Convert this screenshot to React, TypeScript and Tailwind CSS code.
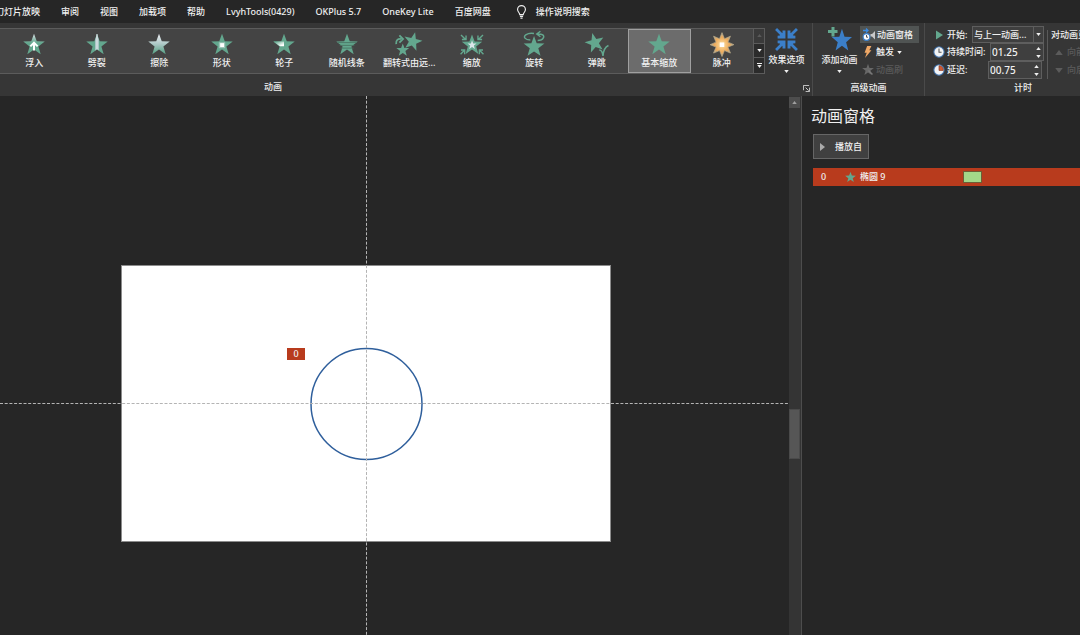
import { useId, useState, type ReactNode } from 'react';

const STAR = 'M12 -.3 15 7.9 23.7 8.100 16.800 13.500 19.300 22 12 17 4.700 22 7.200 13.500 .3 8.100 9 7.900Z';
const GREEN = '#63a78e';

type EffectKind =
  | 'float'
  | 'split'
  | 'wipe'
  | 'shape'
  | 'wheel'
  | 'bars'
  | 'turn'
  | 'zoom'
  | 'spin'
  | 'bounce'
  | 'basic'
  | 'pulse';

const TABS = ['幻灯片放映', '审阅', '视图', '加载项', '帮助', 'LvyhTools(0429)', 'OKPlus 5.7', 'OneKey Lite', '百度网盘'];

const EFFECTS: { kind: EffectKind; label: string }[] = [
  { kind: 'float', label: '浮入' },
  { kind: 'split', label: '劈裂' },
  { kind: 'wipe', label: '擦除' },
  { kind: 'shape', label: '形状' },
  { kind: 'wheel', label: '轮子' },
  { kind: 'bars', label: '随机线条' },
  { kind: 'turn', label: '翻转式由远...' },
  { kind: 'zoom', label: '缩放' },
  { kind: 'spin', label: '旋转' },
  { kind: 'bounce', label: '弹跳' },
  { kind: 'basic', label: '基本缩放' },
  { kind: 'pulse', label: '脉冲' },
];

function EffectGlyph({ kind }: { kind: EffectKind }) {
  const id = useId();
  const star = <path d={STAR} fill={GREEN} />;

  switch (kind) {
    case 'float':
      return (
        <>
          <linearGradient id={id} x1="0" y1="0" x2="0" y2="1">
            <stop offset="0" stopColor="#dde3e8" />
            <stop offset="0.45" stopColor={GREEN} />
          </linearGradient>
          <path d={STAR} fill={`url(#${id})`} />
          <path d="M12 18V11M8 13.5 12 9.5 16 13.5" fill="none" stroke="#fff" strokeWidth="2.2" />
        </>
      );
    case 'split':
      return (
        <>
          {star}
          <path d="M12 0 14 6.2V18L12 16.6 10 18V6.2Z" fill="#b7cbd0" />
          <path d="M12 0V16.6" stroke="#e4e9ec" strokeWidth="1" />
        </>
      );
    case 'wipe':
      return (
        <>
          <linearGradient id={id} x1="0" y1="0" x2="0" y2="1">
            <stop offset="0.1" stopColor="#e4e9ee" />
            <stop offset="0.5" stopColor="#adc8c6" />
            <stop offset="0.9" stopColor={GREEN} />
          </linearGradient>
          <path d={STAR} fill={`url(#${id})`} />
        </>
      );
    case 'shape':
      return (
        <>
          {star}
          <rect x="8.5" y="9" width="7" height="6.5" fill="#9fc6b9" />
          <rect x="10" y="10" width="4.2" height="4.2" fill="#fff" />
        </>
      );
    case 'wheel':
      return (
        <>
          <linearGradient id={id} x1="0" y1="0" x2="1" y2="1">
            <stop offset="0.1" stopColor={GREEN} />
            <stop offset="0.8" stopColor="#fff" />
          </linearGradient>
          {star}
          <path d="M0.6 8.3H12V13.4H7.6Z" fill={`url(#${id})`} />
        </>
      );
    case 'bars':
      return (
        <>
          {star}
          <path d="M2 9.4H22M4 12.4H20M5 15.4H19" stroke="#47705f" strokeWidth=".9" />
        </>
      );
    case 'turn':
      return (
        <>
          <path d={STAR} fill={GREEN} transform="translate(6 -2) scale(.86) rotate(14 12 11)" />
          <path d={STAR} fill={GREEN} transform="translate(-2 10.500) scale(.6)" />
          <path d="M-2 11C-2.500 6.500 0 5 3.500 5.500M1.500 1.500 5.500 5.500 1.500 9.500" fill="none" stroke={GREEN} strokeWidth="2" />
        </>
      );
    case 'zoom':
      return (
        <>
          <path d={STAR} fill={GREEN} transform="translate(.6 .8) scale(.95)" />
          <path d={STAR} fill="#dbe5ea" transform="translate(7 7) scale(.42)" />
          <path
            d="M0 1 5 6M5.500 1.500V6H1M24 1 19 6M18.500 1.500V6H23M-.5 22 4 17.500M0 17.500H4V22M24.500 22 20 17.500M24 17.500H20V22"
            fill="none"
            stroke={GREEN}
            strokeWidth="1.5"
          />
        </>
      );
    case 'spin':
      return (
        <>
          <path d={STAR} fill={GREEN} transform="translate(.4 2.500) scale(.97)" />
          <path
            d="M8 6.500C2 6.500 0 3 3 1C6-1 9-1 12-.5M19-3 15 0 19 3M15 0C21-.5 24 1.500 22 4.500C21 6.500 19 7 16 7"
            fill="none"
            stroke={GREEN}
            strokeWidth="1.6"
          />
        </>
      );
    case 'bounce':
      return (
        <>
          <path d={STAR} fill={GREEN} transform="translate(-1.500 -1) scale(.9) rotate(-14 12 11)" />
          <path d="M14.500 17.500C17 17.500 18 19 18.500 24C19 18 21 14 24.500 12.500" fill="none" stroke={GREEN} strokeWidth="1.700" />
        </>
      );
    case 'pulse':
      return (
        <>
          <radialGradient id={id} gradientUnits="userSpaceOnUse" cx="12" cy="11.600" r="12.500">
            <stop offset="0.2" stopColor="#f8d08c" />
            <stop offset="0.65" stopColor="#ecaa5c" />
            <stop offset="1" stopColor="#b3aa94" />
          </radialGradient>
          <path
            d="M12-1.500 14.700 5.200 21.200 2.400 18.500 8.900 25 11.600 18.500 14.300 21.200 20.800 14.700 18.100 12 24.600 9.300 18.100 2.800 20.800 5.500 14.300-1 11.600 5.500 8.900 2.800 2.400 9.300 5.200Z"
            fill={`url(#${id})`}
            stroke="#b8a887"
            strokeWidth=".8"
          />
          <rect x="9.500" y="9.200" width="5" height="5" fill="#fff" />
        </>
      );
    default:
      return star;
  }
}

function Caret({ up = false, className = 'h-[3px] w-[5px]' }: { up?: boolean; className?: string }) {
  return (
    <svg viewBox="0 0 6 4" className={`shrink-0 ${className}`} fill="currentColor" aria-hidden="true">
      <path d={up ? 'M0 4H6L3 0Z' : 'M0 0H6L3 4Z'} />
    </svg>
  );
}

function TabBar() {
  return (
    <nav className="flex h-[23px] shrink-0 items-center gap-[21px] overflow-hidden whitespace-nowrap bg-[#262626]">
      {TABS.map((tab, i) => (
        <button key={tab} type="button" className={i === 0 ? '-ml-[5px]' : ''}>
          {tab}
        </button>
      ))}
      <button type="button" className="flex items-center gap-[9px] pl-1">
        <svg viewBox="0 0 12 16" className="h-[14px] w-[11px]" fill="none" stroke="#eee" strokeWidth="1.3" aria-hidden="true">
          <path d="M4 11C4 9 1.500 8 1.500 5.200A4.500 4.500 0 0 1 10.500 5.200C10.500 8 8 9 8 11ZM4.200 13H7.800M4.800 15H7.200" />
        </svg>
        操作说明搜索
      </button>
    </nav>
  );
}

function Gallery() {
  const [selected, setSelected] = useState<EffectKind>('basic');

  return (
    <section className="flex w-[765px] shrink-0 flex-col pt-[5px]">
      <div className="flex h-[46px] border border-l-0 border-[#5c5c5c] bg-[#444]">
        <div className="grid flex-1 grid-cols-12 pl-[3px]">
          {EFFECTS.map(({ kind, label }) => (
            <button
              key={kind}
              type="button"
              aria-pressed={selected === kind}
              onClick={() => setSelected(kind)}
              className={`flex flex-col items-center whitespace-nowrap border pt-1 ${
                selected === kind ? 'border-[#a0a0a0] bg-[#6c6c6c]' : 'border-transparent'
              }`}
            >
              <svg viewBox="0 0 24 24" className="h-[22px] w-[22px] shrink-0 overflow-visible" aria-hidden="true">
                <EffectGlyph kind={kind} />
              </svg>
              {label}
            </button>
          ))}
        </div>
        <div className="grid w-[11px] grid-rows-3 divide-y divide-[#5c5c5c] border-l border-[#5c5c5c] bg-[#2b2b2b]">
          <button type="button" aria-label="上一行" disabled className="flex items-center justify-center bg-[#3a3a3a] text-[#5a5a5a]">
            <Caret up />
          </button>
          <button type="button" aria-label="下一行" className="flex items-center justify-center">
            <Caret />
          </button>
          <button type="button" aria-label="其他" className="flex flex-col items-center justify-center gap-px">
            <span className="h-px w-[5px] bg-current" />
            <Caret />
          </button>
        </div>
      </div>
      <h2 className="flex flex-1 items-center justify-center pr-[219px] pt-1">动画</h2>
    </section>
  );
}

function EffectOptions() {
  return (
    <section className="flex w-12 shrink-0 flex-col border-r border-[#4a4a4a] pt-1">
      <button type="button" className="flex flex-col items-center whitespace-nowrap pr-1">
        <svg viewBox="0 0 22 22" className="mt-px h-[23px] w-[23px]" aria-hidden="true">
          <path d="M1 1 7 7M21 1 15 7M1 21 7 15M21 21 15 15" stroke="#3b7fc9" strokeWidth="2.600" />
          <path
            d="M10 10H2.500V7.500L4.500 7.200 7.200 4.500V2.500H10ZM12 10H19.500V7.500L17.500 7.200 14.800 4.500V2.500H12ZM10 12H2.500V14.500L4.500 14.800 7.200 17.500V19.500H10ZM12 12H19.500V14.500L17.500 14.800 14.800 17.500V19.500H12Z"
            fill="#3b7fc9"
          />
        </svg>
        <span className="mt-[2px]">效果选项</span>
        <Caret className="mt-[3px] h-[3px] w-[5px]" />
      </button>
      <button type="button" aria-label="更多动画选项" className="mr-[2px] mt-auto self-end pb-1">
        <svg viewBox="0 0 8 8" className="h-[7px] w-[7px]" fill="none" stroke="#ddd" aria-hidden="true">
          <path d="M.5 6V.5H7M3 3 6.500 6.500M7.500 3V7.500H3" />
        </svg>
      </button>
    </section>
  );
}

function AdvancedGroup() {
  return (
    <section className="flex w-28 shrink-0 flex-col border-r border-[#4a4a4a] pt-[3px]">
      <div className="flex gap-[2px] pl-2">
        <button type="button" className="flex w-[37px] shrink-0 flex-col items-center whitespace-nowrap">
          <svg viewBox="0 0 24 24" className="mt-px h-6 w-6" aria-hidden="true">
            <path d="M3.500 0H6.500V3H9.500V6H6.500V9.500H3.500V6H0V3H3.500Z" fill={GREEN} />
            <path d={STAR} fill="#3b7fc9" transform="translate(3.500 2) scale(.87 .98)" />
          </svg>
          <span className="mt-[2px]">添加动画</span>
          <Caret className="mt-[3px] h-[3px] w-[5px]" />
        </button>
        <div className="flex flex-col items-start">
          <button type="button" aria-pressed="true" className="flex h-[17px] w-[59px] items-center gap-px whitespace-nowrap bg-[#505453] pl-[2px]">
            <svg viewBox="0 0 14 14" className="h-[14px] w-[14px]" fill="none" aria-hidden="true">
              <path d="M1 2.500H6M4 .5 6 2.500 4 4.500" stroke="#3b8be0" strokeWidth="1.300" />
              <circle cx="4.500" cy="9" r="3.400" fill="#fff" stroke="#3b7fc9" strokeWidth="1.200" />
              <path d="M4.500 7V9.200H6" stroke="#555" />
              <path d="M8.500 6H10L13 3V11.500L10 8.500H8.500Z" fill="#c8c8c8" />
            </svg>
            动画窗格
          </button>
          <button type="button" className="flex h-[18px] items-center gap-[3px] pl-[3px]">
            <svg viewBox="0 0 10 14" className="h-[12px] w-[10px]" aria-hidden="true">
              <path d="M4 0H9L6.500 5H9L1.500 14 3.500 8H1Z" fill="#f0a866" />
            </svg>
            触发
            <Caret />
          </button>
          <button type="button" disabled className="flex h-[18px] items-center gap-[2px] pl-[2px] text-[#5b5b5b]">
            <svg viewBox="0 0 24 24" className="h-[12px] w-[12px]" aria-hidden="true">
              <path d={STAR} fill="#686868" />
              <path d="M13 13 21 21" stroke="#777" strokeWidth="3" />
            </svg>
            动画刷
          </button>
        </div>
      </div>
      <h2 className="flex flex-1 items-center justify-center">高级动画</h2>
    </section>
  );
}

function ClockIcon({ late = false }: { late?: boolean }) {
  return (
    <svg viewBox="0 0 14 14" className="h-[12px] w-[12px] shrink-0" aria-hidden="true">
      <circle cx="7" cy="7" r="6" fill="#f1f3f5" stroke="#3e6fa9" strokeWidth="1.200" />
      {late ? (
        <path d="M7 7.500V2A5 5 0 0 1 12 7.500Z" fill="#cf5a35" stroke="#8a3b24" strokeWidth=".8" />
      ) : (
        <path d="M7 3V7.300H10" fill="none" stroke="#555" strokeWidth="1.200" />
      )}
    </svg>
  );
}

function TimeField({ id, label, icon, initial, shift }: { id: string; label: string; icon: ReactNode; initial: string; shift?: boolean }) {
  const [value, setValue] = useState(initial);

  function step(delta: number) {
    const next = Math.max(0, Number(value) + delta);
    setValue(next.toFixed(2).padStart(5, '0'));
  }

  return (
    <div className={`flex h-[18px] items-center ${shift ? 'pr-[2px]' : ''}`}>
      {icon}
      <label htmlFor={id} className="ml-[2px] flex-1 whitespace-nowrap">
        {label}
      </label>
      <div className="flex h-[18px] w-[54px] border border-[#5e5e5e] bg-[#3f3f3f]">
        <input
          id={id}
          value={value}
          onChange={(e) => setValue(e.target.value)}
          className="w-0 flex-1 bg-transparent pl-px text-[10px] outline-none"
        />
        <div className="flex w-[10px] flex-col items-center justify-center gap-[5px]">
          <button type="button" aria-label={`${label}增加`} onClick={() => step(0.25)}>
            <Caret up />
          </button>
          <button type="button" aria-label={`${label}减少`} onClick={() => step(-0.25)}>
            <Caret />
          </button>
        </div>
      </div>
    </div>
  );
}

function TimingGroup() {
  return (
    <section className="flex w-[196px] shrink-0 flex-col pl-2 pt-[3px]">
      <div className="flex">
        <div className="flex w-[111px] shrink-0 flex-col">
          <div className="flex h-[17px] items-center">
            <svg viewBox="0 0 12 12" className="h-[12px] w-[12px] shrink-0" aria-hidden="true">
              <path d="M3 1.500 10 6 3 10.500Z" fill={GREEN} />
            </svg>
            <label htmlFor="start" className="ml-[2px] flex-1 whitespace-nowrap">
              开始:
            </label>
            <div className="grid h-[17px] w-[72px] grid-cols-[1fr_10px] border border-[#5e5e5e] bg-[#3f3f3f]">
              <select id="start" className="col-span-2 col-start-1 row-start-1 appearance-none bg-transparent pl-px outline-none">
                <option>与上一动画...</option>
              </select>
              <span className="pointer-events-none col-start-2 row-start-1 flex items-center justify-center border-l border-[#5e5e5e]">
                <Caret />
              </span>
            </div>
          </div>
          <TimeField id="duration" label="持续时间:" icon={<ClockIcon />} initial="01.25" />
          <TimeField id="delay" label="延迟:" icon={<ClockIcon late />} initial="00.75" shift />
        </div>
        <div className="ml-[3px] mt-1 flex flex-col whitespace-nowrap border-l border-[#5a5a5a] pl-[3px]">
          <h3 className="-mt-1 flex h-[17px] items-center">对动画重新排序</h3>
          <button type="button" disabled className="flex h-[18px] items-center gap-1 pl-1 text-[#5b5b5b]">
            <Caret up className="h-[5px] w-[8px]" />
            向前移动
          </button>
          <button type="button" disabled className="flex h-[18px] items-center gap-1 pl-1 text-[#5b5b5b]">
            <Caret className="h-[5px] w-[8px]" />
            向后移动
          </button>
        </div>
      </div>
      <h2 className="flex flex-1 items-center justify-center pr-2">计时</h2>
    </section>
  );
}

function SlideCanvas() {
  return (
    <main className="relative min-w-0 flex-1 overflow-hidden">
      <div className="absolute left-[121px] top-[169px] h-[277px] w-[490px] border border-[#8c8c8c] bg-white" />
      <svg className="absolute inset-0 h-full w-full" fill="none" aria-hidden="true">
        <circle cx="366.500" cy="308" r="55.500" stroke="#2f5f9c" strokeWidth="1.500" />
        <g stroke="#b4b4b4" strokeDasharray="3 1.700">
          <path d="M366.500 0V1200" />
          <path d="M0 307.500H788" />
        </g>
      </svg>
      <span className="absolute left-[287px] top-[252px] flex h-3 w-[18px] items-center justify-center bg-[#b83b1d]">0</span>
    </main>
  );
}

function ScrollBar() {
  return (
    <div className="flex w-[12px] shrink-0 flex-col bg-[#343434] pr-px pt-px">
      <button type="button" aria-label="向上滚动" className="flex h-[11px] items-center justify-center bg-[#4d4d4d] text-[#a0a0a0]">
        <Caret up />
      </button>
      <div className="basis-[301px]" />
      <div className="h-[50px] shrink-0 border border-[#4a4a4a] bg-[#565656]" />
    </div>
  );
}

function AnimationPane() {
  return (
    <aside className="w-[279px] shrink-0 border-l border-[#4d4d4d] pl-[11px] pt-2">
      <h1 className="-ml-[2px] text-[16px] font-normal leading-6">动画窗格</h1>
      <button type="button" className="mt-[6px] flex h-[25px] w-14 items-center gap-[10px] border border-[#666] bg-[#404040] pl-[6px]">
        <svg viewBox="0 0 5 8" className="h-[8px] w-[5px]" fill="#aaa" aria-hidden="true">
          <path d="M0 0 5 4 0 8Z" />
        </svg>
        播放自
      </button>
      <ul className="mt-[9px]">
        <li className="flex h-[18px] items-center bg-[#b83b1d] pl-2">
          <span className="w-6">0</span>
          <svg viewBox="0 0 24 24" className="h-[11px] w-[11px]" aria-hidden="true">
            <path d={STAR} fill={GREEN} />
          </svg>
          <span className="ml-1 w-[103px]">椭圆 9</span>
          <span className="h-[12px] w-[19px] border border-[#6d5d36] bg-[#a3d889]" />
        </li>
      </ul>
    </aside>
  );
}

export default function App() {
  return (
    <div className="flex h-screen flex-col overflow-hidden bg-[#262626] font-['Noto_Sans','Noto_Sans_CJK_SC',sans-serif] text-[9px] font-medium leading-[14px] text-[#f0f0f0]">
      <TabBar />
      <div className="flex h-[73px] shrink-0 overflow-hidden bg-[#363636]">
        <Gallery />
        <EffectOptions />
        <AdvancedGroup />
        <TimingGroup />
      </div>
      <div className="flex min-h-0 flex-1">
        <SlideCanvas />
        <ScrollBar />
        <AnimationPane />
      </div>
    </div>
  );
}
